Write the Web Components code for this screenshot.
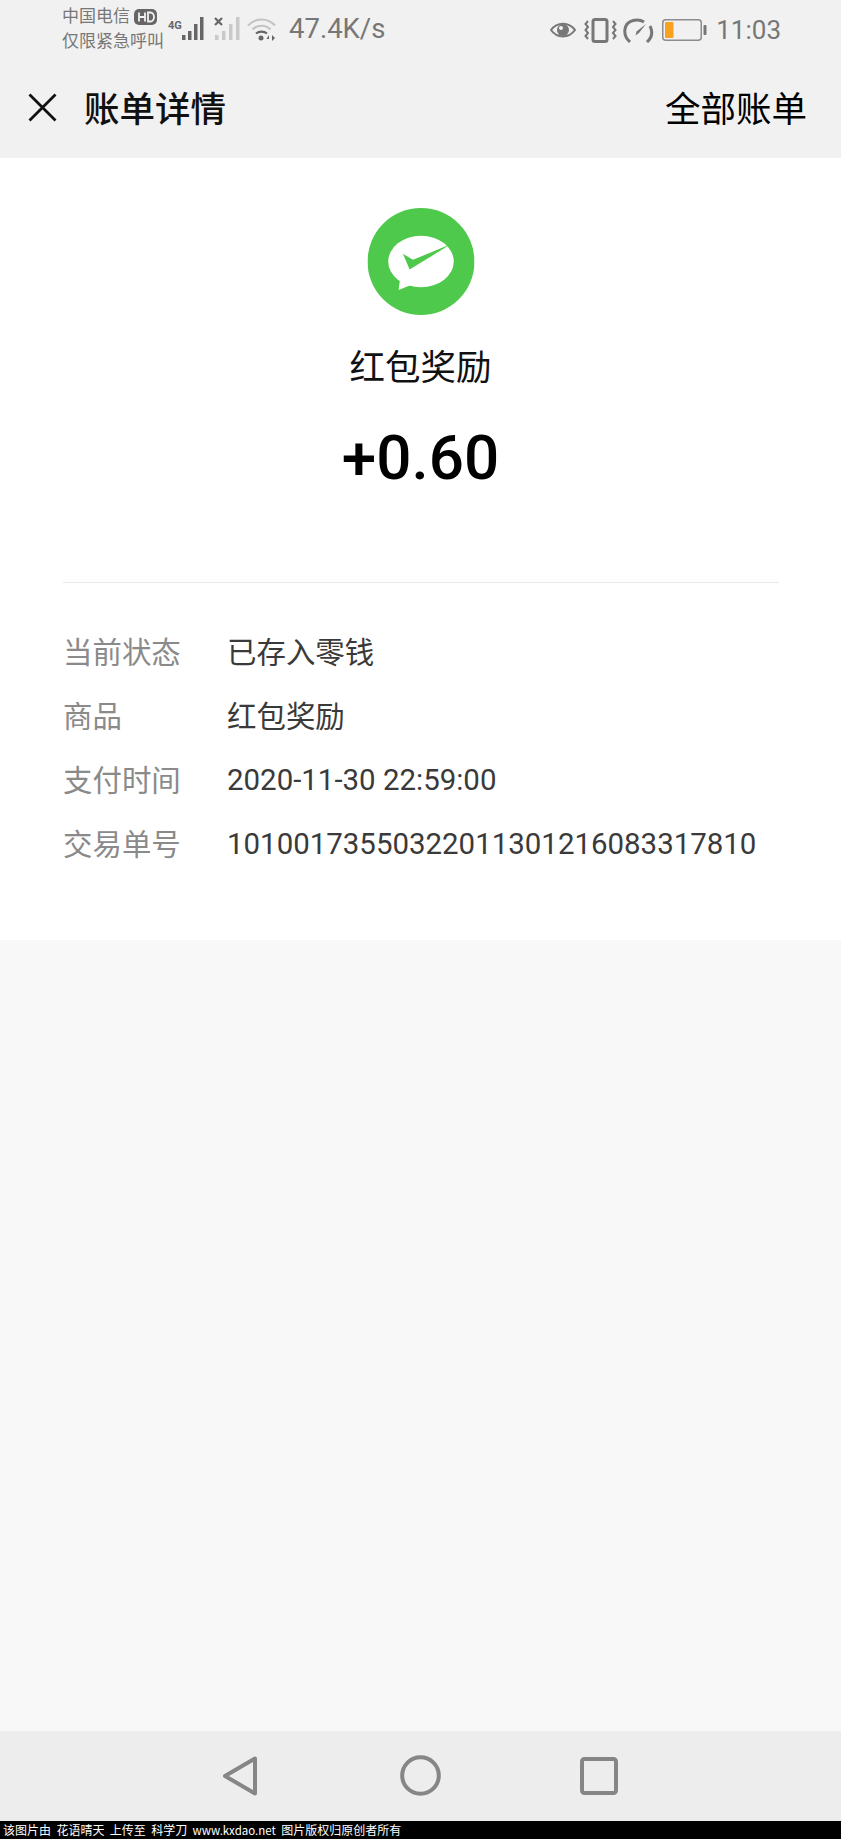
<!DOCTYPE html>
<html lang="zh">
<head>
<meta charset="utf-8">
<title>账单详情</title>
<style>
    html, body{
        margin: 0;
        height: 100%;
    }
    body{
        font-family: Roboto, "Noto Sans CJK SC", sans-serif;
    }
    bill-page{
        height: 1839px;
    }
</style>
</head>
<body>

<bill-page>
    <status-bar slot="top"></status-bar>
    <title-bar slot="top" heading="账单详情" action="全部账单"></title-bar>
    <bill-summary slot="top" name="红包奖励" amount="+0.60">
        <bill-row label="当前状态">已存入零钱</bill-row>
        <bill-row label="商品">红包奖励</bill-row>
        <bill-row label="支付时间" digits>2020-11-30 22:59:00</bill-row>
        <bill-row label="交易单号" digits>10100173550322011301216083317810</bill-row>
    </bill-summary>
    <soft-keys slot="bottom"></soft-keys>
    <water-mark slot="bottom">该图片由&nbsp;&nbsp;花语晴天&nbsp;&nbsp;上传至&nbsp;&nbsp;科学刀&nbsp;&nbsp;<span style="font-size:11.500px">www.kxdao.net</span>&nbsp;&nbsp;图片版权归原创者所有</water-mark>
</bill-page>

<script>
// one small helper, every element just sets its shadow html
class Base extends HTMLElement {
    connectedCallback(){
        if (!this.shadowRoot) this.attachShadow({ mode: 'open' });
        this.shadowRoot.innerHTML = this.html();
    }
}

class BillPage extends Base {
    html(){ return `
<style>
    :host{
        display: flex;
        flex-direction: column;
        background: #f8f8f8;
        overflow: hidden;
    }
    .fill{
        flex: 1;
    }
</style>
<slot name="top"></slot>
<div class="fill"></div>
<slot name="bottom"></slot>
`; }
}

class StatusBar extends Base {
    html(){ return `
<style>
    :host{
        display: flex;
        align-items: flex-start;
        height: 56px;
        padding: 4px 60px 0 62px;
        box-sizing: border-box;
        background: #f1f1f1;
        color: #777;
    }
    .carrier{
        font-size: 17px;
        line-height: 25px;
        width: 106px;
        flex: none;
    }
    .line{
        display: flex;
        align-items: center;
        gap: 4px;
        white-space: nowrap;
    }
    svg{
        display: block;
        flex: none;
    }
    .net{
        display: flex;
        align-items: flex-end;
        height: 38px;
    }
    .speed{
        font-size: 27.500px;
        line-height: 40px;
        margin-left: 12px;
        margin-bottom: -7px;
    }
    .right{
        margin-left: auto;
        display: flex;
        align-items: center;
        height: 48px;
        margin-top: 2px;
    }
    .time{
        font-size: 26px;
        margin-left: 9px;
        line-height: 48px;
    }
</style>
<div class="carrier">
    <div class="line">中国电信
        <svg width="23" height="16" viewBox="0 0 23 16"><rect width="23" height="16" rx="5" fill="#666"/><path d="M5 3.500v9M11 3.500v9M5 8h6M14 3.500v9h2.500a3.500 4.500 0 0 0 0-9z" fill="none" stroke="#f1f1f1" stroke-width="1.800"/></svg>
    </div>
    <div class="line">仅限紧急呼叫</div>
</div>
<div class="net">
    <svg width="39" height="26" viewBox="0 0 39 26">
        <text x="0" y="13" font-family="Roboto" font-weight="700" font-size="11" fill="#666">4G</text>
        <g fill="#666"><rect x="14" y="19" width="3.500" height="5"/><rect x="20" y="15" width="3.500" height="9"/><rect x="26" y="8" width="3.500" height="16"/><rect x="32" y="1" width="3.500" height="23"/></g>
    </svg>
    <svg width="34" height="26" viewBox="0 0 34 26" style="margin-left:7px">
        <path d="M1 2l7 7M8 2l-7 7" stroke="#666" stroke-width="2.200"/>
        <g fill="#c9c9c9"><rect x="1" y="19" width="3.500" height="5"/><rect x="8" y="15" width="3.500" height="9"/><rect x="15" y="8" width="3.500" height="16"/><rect x="22" y="1" width="3.500" height="23"/></g>
    </svg>
    <svg width="30" height="26" viewBox="0 0 30 26" style="margin-left:-1px">
        <g fill="none" stroke="#c4c4c4" stroke-width="2.200"><path d="M1 9.500C8.500 1.500 20.500 1.500 28 9.500"/><path d="M5.500 13.500C10.500 8.500 18.500 8.500 23.500 13.500"/></g>
        <path d="M9 17.500C12 15 17 15 20 17.500" fill="none" stroke="#666" stroke-width="2.200"/>
        <circle cx="14" cy="22" r="2.500" fill="#666"/>
        <path d="M22 24v-5l-2.500 4h2.500M25 19v6l3-3z" fill="#666"/>
    </svg>
    <div class="speed">47.4K/s</div>
</div>
<div class="right">
    <svg width="26" height="20" viewBox="0 0 26 20"><path d="M1 10C7 1.500 19 1.500 25 10 19 18.500 7 18.500 1 10z" fill="none" stroke="#777" stroke-width="2"/><circle cx="13" cy="10" r="6" fill="#777"/><circle cx="11" cy="8" r="2" fill="#f1f1f1"/></svg>
    <svg width="33" height="25" viewBox="0 0 33 25" style="margin-left:8px">
        <rect x="9" y="1.500" width="14" height="22" rx="2" fill="none" stroke="#777" stroke-width="3"/>
        <path d="M4 3l-2.500 3 2.500 3-2.500 3 2.500 3-2.500 3 2.500 3M29 3l2.500 3-2.500 3 2.500 3-2.500 3 2.500 3-2.500 3" fill="none" stroke="#777" stroke-width="2"/>
    </svg>
    <svg width="31" height="25" viewBox="0 0 31 25" style="margin-left:6px">
        <path d="M7 24C-1 17 .5 5 10 2.500c4-1 8-.5 11 1.500" fill="none" stroke="#777" stroke-width="3"/>
        <path d="M27 8c3 6 2 11.500-3 16" fill="none" stroke="#777" stroke-width="3"/>
        <path d="M23 6L16 15l-3.500 2.500 1-4z" fill="#777"/>
    </svg>
    <svg width="45" height="22" viewBox="0 0 45 22" style="margin-left:8px">
        <rect x=".75" y=".75" width="38.500" height="20.500" rx="3" fill="none" stroke="#8c8c8c" stroke-width="1.500"/>
        <rect x="3" y="3" width="8.500" height="16" rx="1" fill="#f7a11f"/>
        <rect x="41.500" y="6" width="3" height="10" rx="1" fill="#777"/>
    </svg>
    <div class="time">11:03</div>
</div>
`; }
}

class TitleBar extends Base {
    html(){ return `
<style>
    :host{
        display: flex;
        align-items: center;
        height: 102px;
        padding: 0 34px 2px 28px;
        box-sizing: border-box;
        background: #f1f1f1;
        color: #000;
        font-family: "Noto Sans CJK SC", sans-serif;
        font-size: 35.500px;
    }
    svg{
        display: block;
        margin-right: 27px;
    }
    .title{
        font-weight: 500;
        color: #111;
    }
    .action{
        margin-left: auto;
        font-weight: 400;
    }
</style>
<svg width="29" height="29" viewBox="0 0 29 29" style="margin-top:2px"><path d="M1.500 1.500l26 26M27.500 1.500l-26 26" stroke="#111" stroke-width="2.800" fill="none"/></svg>
<div class="title">${this.getAttribute('heading')}</div>
<div class="action">${this.getAttribute('action')}</div>
`; }
}

class BillSummary extends Base {
    html(){ return `
<style>
    :host{
        display: block;
        height: 782px;
        box-sizing: border-box;
        padding-top: 50px;
        background: #fff;
        text-align: center;
    }
    svg{
        display: block;
        margin: 0 auto;
        transform: translateX(.5px);
    }
    .name{
        margin-top: 27px;
        font-family: "Noto Sans CJK SC", sans-serif;
        font-size: 35.500px;
        line-height: 46px;
        color: #111;
    }
    .amount{
        margin-top: 34px;
        font-family: Roboto, sans-serif;
        font-weight: 500;
        font-size: 62px;
        line-height: 72px;
        color: #000;
    }
    .rows{
        margin: 88px 62px 0 63px;
        padding-top: 35px;
        border-top: 1px solid #e9e9e9;
        text-align: left;
    }
</style>
<svg width="107" height="107" viewBox="0 0 320 320">
    <circle cx="160" cy="160" r="160" fill="#4fc94b"/>
    <ellipse cx="160" cy="160" rx="98" ry="77" fill="#fff"/>
    <path d="M98 208L93 245 130 230z" fill="#fff"/>
    <path d="M106 137L126 184 250 108 136 155z" fill="#4fc94b"/>
</svg>
<div class="name">${this.getAttribute('name')}</div>
<div class="amount">${this.getAttribute('amount')}</div>
<div class="rows"><slot></slot></div>
`; }
}

class BillRow extends Base {
    html(){ return `
<style>
    :host{
        display: grid;
        grid-template-columns: 164px 1fr;
        height: 64px;
        align-items: center;
        font-size: 29.450px;
        white-space: nowrap;
    }
    .label{
        font-family: "Noto Sans CJK SC", sans-serif;
        color: #8a8a8a;
    }
    .value{
        font-family: Roboto, "Noto Sans CJK SC", sans-serif;
        color: #3a3a3a;
    }
    :host([digits]) .value{
        padding-top: 3px;
    }
</style>
<div class="label">${this.getAttribute('label')}</div>
<div class="value"><slot></slot></div>
`; }
}

class SoftKeys extends Base {
    html(){ return `
<style>
    :host{
        display: flex;
        height: 90px;
        box-sizing: border-box;
        padding: 24px 0 0 221px;
        background: #ededed;
    }
    svg{
        display: block;
        flex: none;
    }
    .home{ margin-left: 142px; }
    .recent{ margin-left: 139px; }
</style>
<svg width="37" height="42" viewBox="0 0 37 42"><path d="M34 3.500V38.500L4 21z" fill="none" stroke="#868686" stroke-width="4" stroke-linejoin="round"/></svg>
<svg class="home" width="41" height="41" viewBox="0 0 41 41"><circle cx="20.500" cy="20.500" r="18.300" fill="none" stroke="#868686" stroke-width="4"/></svg>
<svg class="recent" width="38" height="38" viewBox="0 0 38 38" style="margin-top:2px"><rect x="2" y="2" width="34" height="34" rx="2.500" fill="none" stroke="#868686" stroke-width="4"/></svg>
`; }
}

class WaterMark extends Base {
    html(){ return `
<style>
    :host{
        display: block;
        height: 18px;
        padding-left: 3px;
        background: #000;
        color: #fff;
        font-family: "Noto Sans CJK SC", sans-serif;
        font-size: 12px;
        line-height: 18px;
        white-space: nowrap;
    }
</style>
<slot></slot>
`; }
}

customElements.define('bill-page', BillPage);
customElements.define('status-bar', StatusBar);
customElements.define('title-bar', TitleBar);
customElements.define('bill-summary', BillSummary);
customElements.define('bill-row', BillRow);
customElements.define('soft-keys', SoftKeys);
customElements.define('water-mark', WaterMark);
</script>
</body>
</html>
